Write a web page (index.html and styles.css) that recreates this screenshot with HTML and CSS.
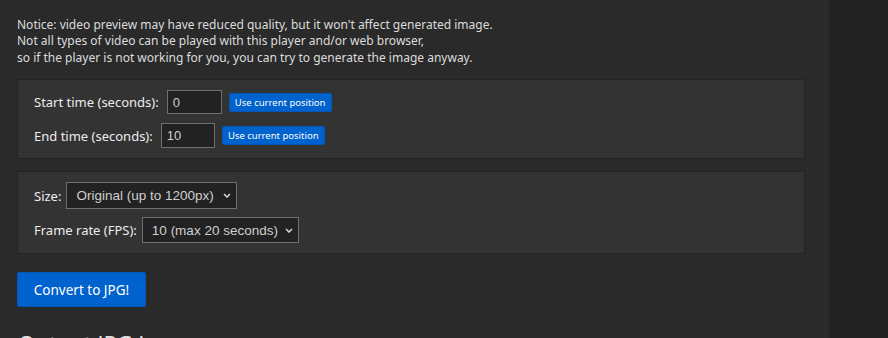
FILE: index.html
```html
<!DOCTYPE html>
<html>
<head>
<meta charset="utf-8">
<link rel="stylesheet" href="styles.css">
</head>
<body>
<div class="layout">
  <main class="main">
    <p class="notice">Notice: video preview may have reduced quality, but it won't affect generated image.<br>Not all types of video can be played with this player and/or web browser,<br>so if the player is not working for you, you can try to generate the image anyway.</p>
    <section class="panel">
      <div class="row">
        <label class="lbl">Start time (seconds):</label>
        <input class="num num1" type="text" value="0">
        <button class="btn-sm">Use current position</button>
      </div>
      <div class="row">
        <label class="lbl">End time (seconds):</label>
        <input class="num num2" type="text" value="10">
        <button class="btn-sm">Use current position</button>
      </div>
    </section>
    <section class="panel panel2">
      <div class="row row-sel">
        <label class="lbl">Size:</label>
        <div class="sel sel1">Original (up to 1200px)<svg class="chev" viewBox="0 0 8 5" width="8" height="5"><path d="M1 1l3 3 3-3" fill="none" stroke="#d8d8d8" stroke-width="1.5"/></svg></div>
      </div>
      <div class="row row-sel">
        <label class="lbl">Frame rate (FPS):</label>
        <div class="sel sel2">10 (max 20 seconds)<svg class="chev" viewBox="0 0 8 5" width="8" height="5"><path d="M1 1l3 3 3-3" fill="none" stroke="#d8d8d8" stroke-width="1.5"/></svg></div>
      </div>
    </section>
    <button class="btn-main">Convert to JPG!</button>
    <h2 class="heading">Output JPG image:</h2>
  </main>
  <aside class="side"></aside>
</div>
</body>
</html>
```
FILE: styles.css
```css
html, body {
  margin: 0;
  padding: 0;
  height: 100%;
  overflow: hidden;
  background: #222222;
}
body {
  font-family: "Noto Sans", "Open Sans", sans-serif;
  color: #e6e6e6;
  font-size: 12px;
}
.layout {
  display: flex;
  height: 338px;
}
.main {
  width: 829px;
  background: #2a2a2a;
  padding: 16.5px 24px 0 17px;
  box-sizing: border-box;
}
.side {
  flex: 1;
  background: #222222;
}
.notice {
  margin: 0 0 13px 0;
  line-height: 16.5px;
  font-size: 12px;
  color: #dcdcdc;
}
.panel {
  border: 1px solid #232323;
  background: #333333;
  padding: 10px 16px 10px 16px;
  display: flex;
  flex-direction: column;
  gap: 9px;
  margin-bottom: 12px;
}
.panel2 {
  gap: 8px;
  margin-bottom: 18px;
}
.row {
  display: flex;
  align-items: center;
  gap: 7px;
}
.row-sel {
  gap: 4px;
}
.lbl {
  font-size: 13px;
  color: #ececec;
  margin-right: 1px;
}
.num {
  width: 55px;
  height: 24px;
  box-sizing: border-box;
  background: #222222;
  border: 1px solid #6f6f6f;
  color: #d0d0d0;
  font-family: "Liberation Sans", Arial, sans-serif;
  font-size: 13px;
  padding: 0 5px;
  margin: 0;
  outline: none;
}
.num2 {
  width: 54px;
  height: 25px;
}
.btn-sm {
  background: #0062cc;
  border: 1px solid #0059b8;
  border-radius: 2px;
  color: #ffffff;
  font-family: "Noto Sans", "Open Sans", sans-serif;
  font-size: 9.5px;
  height: 19px;
  width: 103px;
  padding: 0;
}
.sel {
  box-sizing: border-box;
  height: 27px;
  display: flex;
  align-items: center;
  justify-content: space-between;
  background: #222222;
  border: 1px solid #6f6f6f;
  color: #cfcfcf;
  font-family: "Liberation Sans", Arial, sans-serif;
  font-size: 13.5px;
  padding: 0 5px 0 9px;
}
.sel1 { width: 171px; }
.sel2 { width: 157px; height: 26px; }
.chev { flex: none; }
.btn-main {
  display: block;
  background: #0062cc;
  border: 1px solid #0059b8;
  border-radius: 2px;
  color: #ffffff;
  font-family: "Noto Sans", "Open Sans", sans-serif;
  font-size: 13.5px;
  width: 129px;
  height: 35px;
  padding: 0;
}
.heading {
  margin: 21px 0 0 1px;
  font-size: 22px;
  font-weight: 400;
  color: #e0e0e0;
}
```
